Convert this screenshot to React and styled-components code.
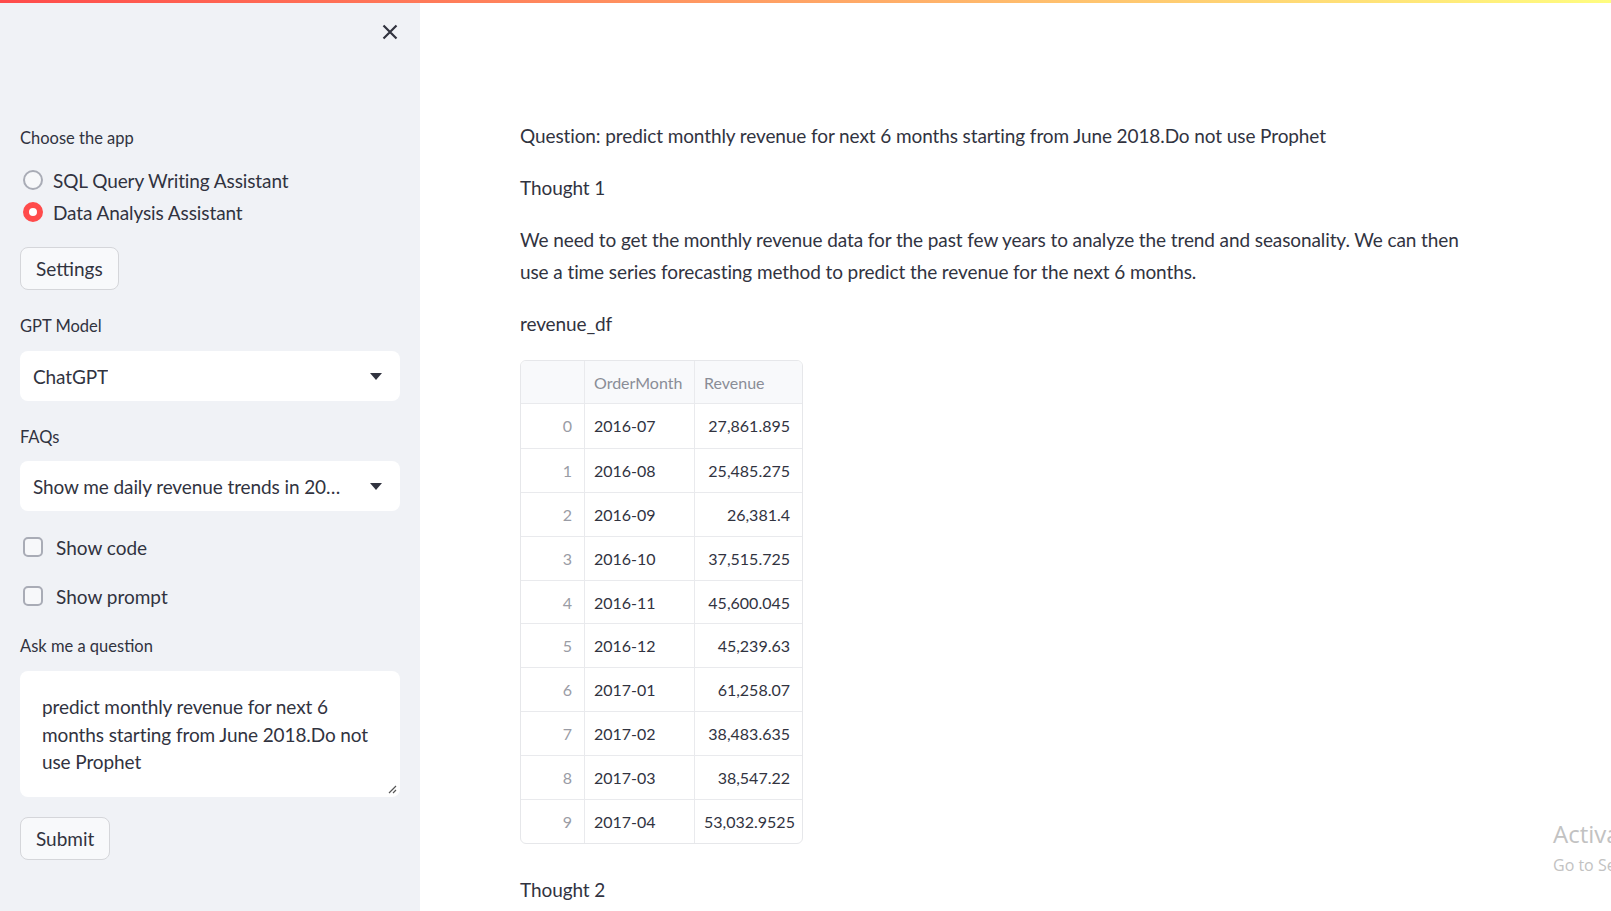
import React from 'react';
import styled, { createGlobalStyle } from 'styled-components';

const GlobalStyle = createGlobalStyle`
  html, body {
    margin: 0;
    padding: 0;
    height: 911px;
    overflow: hidden;
    background: #ffffff;
  }
  body {
    font-family: "Lato", "Liberation Sans", sans-serif;
    color: #31333f;
  }
  * { box-sizing: border-box; }
`;

const Page = styled.div`
  position: relative;
  display: flex;
  width: 100%;
  height: 911px;
`;

// gradient strip on top of the whole app
const Decoration = styled.div`
  position: absolute;
  top: 0;
  left: 0;
  right: 0;
  height: 3px;
  background: linear-gradient(90deg, #ff4b4b, #fffd80);
  z-index: 3;
`;

const Sidebar = styled.aside`
  width: 420px;
  flex-shrink: 0;
  height: 100%;
  background: #f0f2f6;
  padding: 0 20px;
  display: flex;
  flex-direction: column;
`;

const CloseRow = styled.div`
  height: 64px;
  display: flex;
  align-items: center;
  justify-content: flex-end;
  padding-right: 2px;
`;

const Block = styled.div`
  margin-top: ${p => p.$mt || 0}px;
`;

const Label = styled.div`
  font-size: 16.5px;
  line-height: 24px;
  color: #31333f;
`;

const RadioRow = styled.label`
  display: flex;
  align-items: center;
  height: 32px;
  font-size: 19px;
  letter-spacing: -0.1px;
  gap: 10px;
  padding-left: 3px;
`;

const RadioDot = styled.span`
  width: 20px;
  height: 20px;
  border-radius: 50%;
  flex-shrink: 0;
  background: ${p => (p.$on ? '#ffffff' : '#f7f8fa')};
  border: ${p => (p.$on ? '6px solid #ff4b4b' : '2px solid #a9acb6')};
`;

const Button = styled.button`
  font-family: inherit;
  font-size: 19px;
  color: #31333f;
  background: #f8f9fb;
  border: 1px solid #d5d6da;
  border-radius: 8px;
  height: 43px;
  padding: 0 15px;
  cursor: pointer;
`;

const Select = styled.div`
  height: 50px;
  background: #ffffff;
  border-radius: 8px;
  display: flex;
  align-items: center;
  justify-content: space-between;
  gap: 12px;
  padding: 0 18px 0 13px;
  font-size: 19px;
  letter-spacing: -0.1px;
`;

const SelectText = styled.span`
  white-space: nowrap;
  overflow: hidden;
`;

const CheckRow = styled.label`
  display: flex;
  align-items: center;
  height: 28px;
  gap: 13px;
  font-size: 19px;
  padding-left: 3px;
`;

const CheckBox = styled.span`
  width: 20px;
  height: 20px;
  border: 2px solid #a9acb6;
  border-radius: 5px;
  background: #f7f8fa;
  flex-shrink: 0;
`;

const TextArea = styled.div`
  position: relative;
  height: 126px;
  background: #ffffff;
  border-radius: 8px;
  padding: 22px 20px 0 22px;
  font-size: 19px;
  letter-spacing: -0.1px;
  line-height: 27.5px;
`;

const Grip = styled.svg`
  position: absolute;
  right: 3px;
  bottom: 3px;
`;

const Main = styled.main`
  flex: 1;
  padding: 120px 100px 0 100px;
  overflow: hidden;
`;

const Content = styled.div`
  width: 960px;
  display: flex;
  flex-direction: column;
  gap: 20px;
`;

const Para = styled.p`
  margin: 0;
  font-size: 19px;
  letter-spacing: -0.1px;
  line-height: 32px;
`;

const Table = styled.table`
  border-collapse: separate;
  border-spacing: 0;
  border: 1px solid #e6e7ea;
  border-radius: 6px;
  overflow: hidden;
  width: 282px;
  font-size: 16px;
  table-layout: fixed;
`;

const Th = styled.th`
  height: 43px;
  background: #f8f9fb;
  color: #8a8d97;
  font-weight: 400;
  text-align: left;
  padding: 0 9px;
  border-left: ${p => (p.$first ? 'none' : '1px solid #e9eaed')};
  border-bottom: 1px solid #e9eaed;
`;

const Td = styled.td`
  height: 43.9px;
  padding: 0 12px 0 9px;
  text-align: ${p => (p.$right ? 'right' : 'left')};
  color: ${p => (p.$muted ? '#9a9ca5' : '#31333f')};
  border-left: ${p => (p.$first ? 'none' : '1px solid #e9eaed')};
  border-top: ${p => (p.$top ? 'none' : '1px solid #e9eaed')};
  white-space: nowrap;
`;

const Watermark = styled.div`
  position: absolute;
  left: 1553px;
  top: 820px;
  font-family: "Open Sans", "Noto Sans", sans-serif;
  color: #c2c2c2;
  white-space: nowrap;
  line-height: 1.2;
`;

const WmBig = styled.div`
  font-size: 24px;
`;

const WmSmall = styled.div`
  font-size: 16px;
  margin-top: 7px;
`;

const rows = [
  ['2016-07', '27,861.895'],
  ['2016-08', '25,485.275'],
  ['2016-09', '26,381.4'],
  ['2016-10', '37,515.725'],
  ['2016-11', '45,600.045'],
  ['2016-12', '45,239.63'],
  ['2017-01', '61,258.07'],
  ['2017-02', '38,483.635'],
  ['2017-03', '38,547.22'],
  ['2017-04', '53,032.9525'],
];

const Caret = () => (
  <svg width="12" height="7" viewBox="0 0 12 7">
    <path d="M0 0 L12 0 L6 7 Z" fill="#31333f" />
  </svg>
);

export default function App() {
  return (
    <Page>
      <GlobalStyle />
      <Decoration />
      <Sidebar>
        <CloseRow>
          <svg width="16" height="16" viewBox="0 0 16 16">
            <path d="M1.5 1.5 L14.5 14.5 M14.5 1.5 L1.5 14.5" stroke="#31333f" strokeWidth="2.2" />
          </svg>
        </CloseRow>

        <Block $mt={62}>
          <Label>Choose the app</Label>
        </Block>
        <Block $mt={14}>
          <RadioRow><RadioDot />SQL Query Writing Assistant</RadioRow>
          <RadioRow><RadioDot $on />Data Analysis Assistant</RadioRow>
        </Block>
        <Block $mt={19}>
          <Button>Settings</Button>
        </Block>

        <Block $mt={24}>
          <Label>GPT Model</Label>
        </Block>
        <Block $mt={13}>
          <Select><SelectText>ChatGPT</SelectText><Caret /></Select>
        </Block>

        <Block $mt={24}>
          <Label>FAQs</Label>
        </Block>
        <Block $mt={12}>
          <Select><SelectText>Show me daily revenue trends in 20…</SelectText><Caret /></Select>
        </Block>

        <Block $mt={22}>
          <CheckRow><CheckBox />Show code</CheckRow>
        </Block>
        <Block $mt={21}>
          <CheckRow><CheckBox />Show prompt</CheckRow>
        </Block>

        <Block $mt={24}>
          <Label>Ask me a question</Label>
        </Block>
        <Block $mt={13}>
          <TextArea>
            predict monthly revenue for next 6 months starting from June 2018.Do not use Prophet
            <Grip width="10" height="10" viewBox="0 0 10 10">
              <path d="M9 2 L2 9 M9 6 L6 9" stroke="#555" strokeWidth="1.2" />
            </Grip>
          </TextArea>
        </Block>
        <Block $mt={20}>
          <Button>Submit</Button>
        </Block>
      </Sidebar>

      <Main>
        <Content>
          <Para>Question: predict monthly revenue for next 6 months starting from June 2018.Do not use Prophet</Para>
          <Para>Thought 1</Para>
          <Para>
            We need to get the monthly revenue data for the past few years to analyze the trend and seasonality. We can then use a time series forecasting method to predict the revenue for the next 6 months.
          </Para>
          <Para>revenue_df</Para>
          <Table>
            <colgroup>
              <col style={{ width: 63 }} />
              <col style={{ width: 110 }} />
              <col style={{ width: 108 }} />
            </colgroup>
            <thead>
              <tr>
                <Th $first></Th>
                <Th>OrderMonth</Th>
                <Th>Revenue</Th>
              </tr>
            </thead>
            <tbody>
              {rows.map((r, i) => (
                <tr key={i}>
                  <Td $first $right $muted $top={i === 0}>{i}</Td>
                  <Td $top={i === 0}>{r[0]}</Td>
                  <Td $right $top={i === 0}>{r[1]}</Td>
                </tr>
              ))}
            </tbody>
          </Table>
          <Para style={{ marginTop: 10 }}>Thought 2</Para>
        </Content>
      </Main>

      <Watermark>
        <WmBig>Activate Windows</WmBig>
        <WmSmall>Go to Settings to activate Windows.</WmSmall>
      </Watermark>
    </Page>
  );
}
